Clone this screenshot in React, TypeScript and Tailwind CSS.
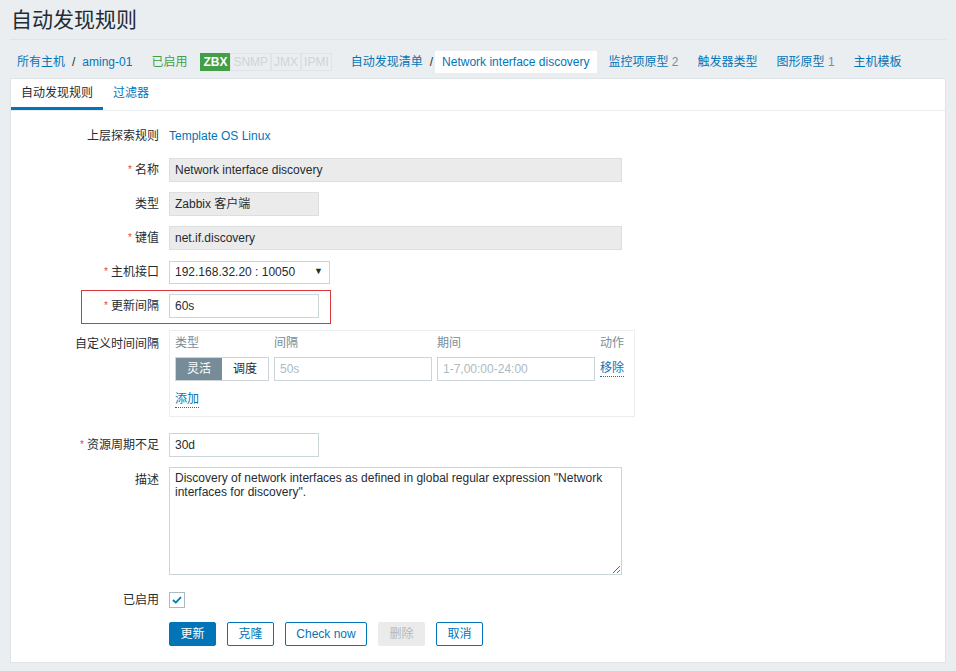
import React from 'react'

const font = "font-['Liberation_Sans','Noto_Sans_CJK_SC',sans-serif]"

function Req() {
  return <span className="text-[#d64e4e] mr-[3px] text-[10px] relative top-[-1px]">*</span>
}

function Row({ label, req, children, className = '' }: { label: string; req?: boolean; children?: React.ReactNode; className?: string }) {
  return (
    <div className={`flex items-center min-h-[24px] ${className}`}>
      <div className="w-[148px] text-right shrink-0">
        {req && <Req />}
        {label}
      </div>
      <div className="ml-[10px] flex items-center">{children}</div>
    </div>
  )
}

function Field({ value, w, readOnly, placeholder }: { value?: string; w: string; readOnly?: boolean; placeholder?: string }) {
  return (
    <div
      className={`h-[24px] ${w} px-[5px] flex items-center border ${
        readOnly ? 'bg-[#ebebeb] border-[#dcdfe0]' : 'bg-white border-[#ccd5d9]'
      } ${placeholder ? 'text-[#acbbc2]' : 'text-[#1f2c33]'}`}
    >
      {value ?? placeholder}
    </div>
  )
}

function Badge({ text, on }: { text: string; on?: boolean }) {
  return (
    <span
      className={`h-[18px] px-[2px] flex items-center text-[12px] leading-none border ${
        on ? 'bg-[#429e47] border-[#429e47] text-white font-bold' : 'border-[#dfe4e7] text-[#ccd5d9]'
      }`}
    >
      {text}
    </span>
  )
}

export default function App() {
  return (
    <div className={`${font} min-h-[671px] bg-[#ebeef0] px-[10px] text-[12px] text-[#1f2c33]`}>
      <div className="h-[40px] border-b border-[#dfe4e7] flex items-center">
        <h1 className="text-[21px] leading-[24px] pl-[1px]">自动发现规则</h1>
      </div>

      <div className="flex items-start pt-[11px] pb-[5px] pl-[7px]">
        <div className="h-[22px] flex items-center">
          <span className="text-[#0275b8]">所有主机</span>
          <span className="mx-[7px]">/</span>
          <span className="text-[#0275b8]">aming-01</span>
          <span className="ml-[19px] text-[#429e47]">已启用</span>
          <div className="ml-[13px] flex">
            <Badge text="ZBX" on />
            <Badge text="SNMP" />
            <Badge text="JMX" />
            <Badge text="IPMI" />
          </div>
          <span className="ml-[19px] text-[#0275b8]">自动发现清单</span>
          <span className="ml-[7px]">/</span>
        </div>
        <div className="ml-[2px] h-[22px] px-[7px] bg-white flex items-center text-[#0275b8]">Network interface discovery</div>
        <div className="h-[22px] flex items-center">
          <span className="ml-[12px] text-[#0275b8]">
            监控项原型 <span className="text-[#768d99]">2</span>
          </span>
          <span className="ml-[19px] text-[#0275b8]">触发器类型</span>
          <span className="ml-[19px] text-[#0275b8]">
            图形原型 <span className="text-[#768d99]">1</span>
          </span>
          <span className="ml-[19px] text-[#0275b8]">主机模板</span>
        </div>
      </div>

      <div className="bg-white border border-[#dfe4e7]">
        <div className="flex h-[32px] border-b border-[#ebeef0]">
          <div className="h-[31px] px-[10px] flex items-center border-b-[3px] border-[#0275b8]">自动发现规则</div>
          <div className="h-[31px] px-[10px] flex items-center border-b-[3px] border-transparent text-[#0275b8]">过滤器</div>
        </div>

        <div className="pt-[13px] pb-[16px] flex flex-col gap-[10px]">
          <Row label="上层探索规则">
            <span className="text-[#0275b8]">Template OS Linux</span>
          </Row>
          <Row label="名称" req>
            <Field value="Network interface discovery" w="w-[453px]" readOnly />
          </Row>
          <Row label="类型">
            <Field value="Zabbix 客户端" w="w-[150px]" readOnly />
          </Row>
          <Row label="键值" req>
            <Field value="net.if.discovery" w="w-[453px]" readOnly />
          </Row>
          <Row label="主机接口" req>
            <div className="h-[23px] w-[161px] pl-[5px] pr-[6px] flex items-center justify-between border border-[#ccd5d9] bg-white">
              <span>192.168.32.20 : 10050</span>
              <span className="text-[9px]">▼</span>
            </div>
          </Row>
          <div className="relative">
            <div className="absolute left-[70px] top-[-4px] w-[250px] h-[34px] border border-[#d9363e]" />
            <Row label="更新间隔" req>
              <Field value="60s" w="w-[150px]" />
            </Row>
          </div>

          <div className="flex items-start mt-[2px]">
            <div className="w-[148px] text-right shrink-0 pt-[5px]">自定义时间间隔</div>
            <div className="ml-[10px] w-[466px] border border-[#ebeef0] px-[5px] pt-[5px] pb-[8px]">
              <div className="flex text-[#768d99] leading-[15px]">
                <div className="w-[99px]">类型</div>
                <div className="w-[163px]">间隔</div>
                <div className="w-[163px]">期间</div>
                <div>动作</div>
              </div>
              <div className="flex items-center mt-[6px]">
                <div className="flex h-[24px] w-[94px] border border-[#ccd5d9]">
                  <div className="w-1/2 bg-[#768d99] text-white flex items-center justify-center">灵活</div>
                  <div className="w-1/2 bg-white flex items-center justify-center">调度</div>
                </div>
                <div className="ml-[5px]">
                  <Field placeholder="50s" w="w-[158px]" />
                </div>
                <div className="ml-[5px]">
                  <Field placeholder="1-7,00:00-24:00" w="w-[158px]" />
                </div>
                <span className="ml-[5px] text-[#0275b8] border-b border-dotted border-[#0275b8] leading-[15px]">移除</span>
              </div>
              <div className="mt-[9px]">
                <span className="text-[#0275b8] border-b border-dotted border-[#0275b8] leading-[15px] inline-block">添加</span>
              </div>
            </div>
          </div>

          <Row label="资源周期不足" req className="mt-[6px]">
            <Field value="30d" w="w-[150px]" />
          </Row>

          <div className="flex items-start">
            <div className="w-[148px] text-right shrink-0 pt-[4px]">描述</div>
            <textarea
              readOnly
              className="ml-[10px] w-[453px] h-[108px] border border-[#ccd5d9] px-[5px] py-[3px] text-[12px] leading-[14px] text-[#1f2c33] outline-none"
              value={'Discovery of network interfaces as defined in global regular expression "Network interfaces for discovery".'}
            />
          </div>

          <Row label="已启用" className="mt-[3px]">
            <div className="w-[16px] h-[16px] border border-[#acbbc2] bg-white flex items-center justify-center">
              <svg width="10" height="8" viewBox="0 0 10 8">
                <path d="M1 4 L3.8 6.6 L9 1.2" fill="none" stroke="#0275b8" strokeWidth="1.8" />
              </svg>
            </div>
          </Row>

          <div className="flex pl-[158px] gap-[11px]">
            <button className="h-[24px] w-[47px] rounded-[2px] bg-[#0275b8] border border-[#0275b8] text-white">更新</button>
            <button className="h-[24px] w-[47px] rounded-[2px] bg-white border border-[#0275b8] text-[#0275b8]">克隆</button>
            <button className="h-[24px] w-[82px] rounded-[2px] bg-white border border-[#0275b8] text-[#0275b8]">Check now</button>
            <button className="h-[24px] w-[47px] rounded-[2px] bg-[#ebebeb] border border-[#ebebeb] text-[#acbbc2]">删除</button>
            <button className="h-[24px] w-[47px] rounded-[2px] bg-white border border-[#0275b8] text-[#0275b8]">取消</button>
          </div>
        </div>
      </div>
    </div>
  )
}
